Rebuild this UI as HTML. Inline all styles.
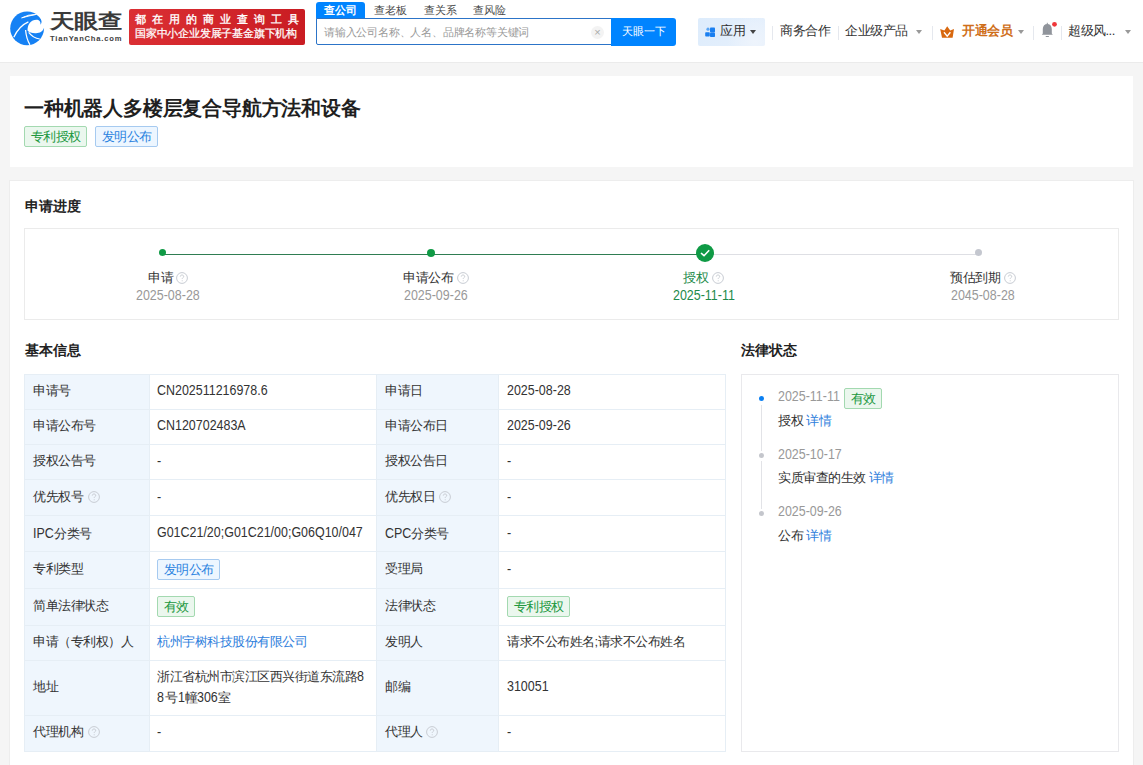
<!DOCTYPE html>
<html><head><meta charset="utf-8">
<style>
*{box-sizing:border-box;margin:0;padding:0}
html,body{width:1143px;height:765px;overflow:hidden}
body{background:#f5f5f5;font-family:"Liberation Sans",sans-serif;color:#333;font-size:12.5px;position:relative}
.a{position:absolute;white-space:nowrap}
#hdr{position:absolute;left:0;top:0;width:1143px;height:63px;background:#fff;border-bottom:1px solid #ebebeb}
.card{position:absolute;background:#fff}
.tag{position:absolute;height:21px;line-height:19px;border:1px solid;border-radius:2px;font-size:13px;letter-spacing:-0.5px;text-align:center;white-space:nowrap}
.tg{color:#22983f;background:#ebf7ee;border-color:#a3d9b0}
.tb{color:#2a82e0;background:#edf6ff;border-color:#a6caf0}
.q{position:absolute;width:12px;height:12px;line-height:0}
.sep{position:absolute;width:1px;height:14px;top:26px;background:#e5e8ee}
.caret{position:absolute;width:0;height:0;border-left:3px solid transparent;border-right:3px solid transparent;border-top:4px solid #999}
.c{position:absolute;white-space:nowrap;font-size:13px;letter-spacing:-0.5px;line-height:16px;color:#333}
.n{position:absolute;white-space:nowrap;font-size:14px;line-height:16px;color:#333;transform:scaleX(.89);transform-origin:0 0}
.h{position:absolute;font-size:14px;font-weight:bold;color:#222;line-height:16px;white-space:nowrap}
.hl{position:absolute;height:1px;background:#e6eef5}
.vl{position:absolute;width:1px;background:#e6eef5}
.lb{position:absolute;background:#eff6fd}
.date{color:#999}
.link{color:#2f80dc}
.ns{display:inline-block;font-size:14px;transform:scaleX(.89);transform-origin:0 0;letter-spacing:0}
</style></head><body>
<div id="hdr">
  <svg class="a" style="left:8px;top:8px" width="40" height="40" viewBox="0 0 40 40">
    <circle cx="19.1" cy="20.4" r="16.9" fill="#1581f4"/>
    <path d="M19.5 22.5 C19.5 16 23 12 28.5 11.8 C31 11.8 33 13.5 32.4 16.8 C34.5 14.5 34.2 10.5 28 6.3 L40 0 L40 19.3 L36.2 19.3 C35 23.5 32 25.2 28 25.2 C24 25.3 21 24.5 19.5 22.5 Z" fill="#fff"/>
    <path d="M13.6 9.9 Q20 6.3 28.4 6.4 Q21 7.8 13.6 9.9 Z" fill="#fff" stroke="#fff" stroke-width="0.9" stroke-linejoin="round"/>
    <path d="M5.8 29.3 Q11 18 20.4 13.9" stroke="#fff" stroke-width="1.25" fill="none"/>
    <path d="M17.6 22 Q18.3 31 22 36.8" stroke="#fff" stroke-width="1.25" fill="none"/>
    <path d="M20.7 24.4 Q25 30.2 31.8 31" stroke="#fff" stroke-width="1.25" fill="none"/>
  </svg>
  <div class="a" style="left:49.6px;top:9.6px;font-size:21px;line-height:24px;font-weight:bold;color:#3a3a3a;transform:scale(1.14,.93);transform-origin:0 0">天眼查</div>
  <div class="a" style="left:50px;top:34px;font-size:7.6px;line-height:10px;font-weight:bold;color:#404040;letter-spacing:0.8px">TianYanCha.com</div>
  <div class="a" style="left:129px;top:9px;width:176px;height:36px;border-radius:2px;background:linear-gradient(90deg,#db2f34,#c91c22)"></div>
  <div class="a" style="left:135px;top:12px;font-size:11px;line-height:14px;color:#fff;letter-spacing:6px;-webkit-text-stroke:0.35px #fff">都在用的商业查询工具</div>
  <div class="a" style="left:135px;top:26px;font-size:11px;line-height:14px;color:#fff;letter-spacing:-0.2px;-webkit-text-stroke:0.25px #fff">国家中小企业发展子基金旗下机构</div>
  <div class="a" style="left:316px;top:2px;width:49px;height:17px;background:#0084ff;border-radius:3px 3px 0 0"></div>
  <div class="a" style="left:316px;top:3px;width:49px;text-align:center;font-size:11px;line-height:14px;color:#fff;font-weight:bold">查公司</div>
  <div class="a" style="left:366px;top:3px;width:49px;text-align:center;font-size:11px;line-height:14px;color:#4a4a4a">查老板</div>
  <div class="a" style="left:415.5px;top:3px;width:49px;text-align:center;font-size:11px;line-height:14px;color:#4a4a4a">查关系</div>
  <div class="a" style="left:465px;top:3px;width:49px;text-align:center;font-size:11px;line-height:14px;color:#4a4a4a">查风险</div>
  <div class="a" style="left:316px;top:18px;width:297px;height:27px;border:1px solid #2c74c8;border-radius:0 0 0 2px;background:#fff"></div>
  <div class="a" style="left:324px;top:24.5px;font-size:11px;line-height:14px;color:#999;letter-spacing:-0.2px">请输入公司名称、人名、品牌名称等关键词</div>
  <div class="a" style="left:591px;top:26px;width:13px;height:13px;border-radius:50%;background:#f3f3f3;color:#aaa;font-size:11px;line-height:13px;text-align:center">×</div>
  <div class="a" style="left:611px;top:18px;width:65px;height:28px;background:#0084ff;border-radius:0 3px 3px 0"></div>
  <div class="a" style="left:612px;top:24px;width:64px;text-align:center;font-size:11px;line-height:14px;color:#fff">天眼一下</div>

  <div class="a" style="left:698px;top:18px;width:67px;height:28px;border-radius:2px;background:radial-gradient(circle at 85% 85%,#eef4fc 0,rgba(238,244,252,0) 45%),linear-gradient(135deg,#ddecfc,#e6f0fc)"></div>
  <svg class="a" style="left:705px;top:27px" width="11" height="11" viewBox="0 0 11 11">
    <circle cx="3" cy="2.2" r="1.6" fill="#5aa6f5"/>
    <rect x="5" y="0.6" width="5" height="4.8" rx="0.8" fill="#1a7ff0"/>
    <rect x="0.2" y="5.2" width="4.6" height="4.4" rx="0.8" fill="#1a7ff0"/>
    <rect x="5" y="5.6" width="5" height="4.4" rx="0.8" fill="#1a7ff0"/>
  </svg>
  <div class="c" style="left:720px;top:23px">应用</div>
  <div class="caret" style="left:750px;top:30px;border-top-color:#444"></div>
  <div class="sep" style="left:772px"></div>
  <div class="c" style="left:780px;top:23px">商务合作</div>
  <div class="sep" style="left:838px"></div>
  <div class="c" style="left:845px;top:23px">企业级产品</div>
  <div class="caret" style="left:916px;top:30px"></div>
  <div class="sep" style="left:932px"></div>
  <svg class="a" style="left:940px;top:26px" width="15" height="13" viewBox="0 0 15 13">
    <path d="M0.2 3 L4.4 4.6 L7.2 0.2 L10.2 4.6 L14 3 L12.6 11.7 L2 11.7 Z" fill="#d8680f"/>
    <path d="M4 6.3 L7.2 10.2 L10.4 6.3" stroke="#fff" stroke-width="1.4" fill="none"/>
  </svg>
  <div class="c" style="left:962px;top:23px;color:#cf6f1a;font-weight:bold">开通会员</div>
  <div class="caret" style="left:1018px;top:30px"></div>
  <div class="sep" style="left:1033px"></div>
  <svg class="a" style="left:1041px;top:21px" width="17" height="17" viewBox="0 0 17 17">
    <path d="M0.8 13.7 L1.8 12.4 L1.8 8 C1.8 4.9 3.8 3 6.3 3 C8.8 3 10.8 4.9 10.8 8 L10.8 12.4 L11.8 13.7 Z" fill="#90949b"/>
    <rect x="5.8" y="1.8" width="1" height="1.6" fill="#90949b"/>
    <rect x="4.6" y="15" width="3.4" height="1" rx="0.5" fill="#90949b"/>
    <circle cx="13.5" cy="3.3" r="2.4" fill="#f0373a"/>
  </svg>
  <div class="sep" style="left:1061px"></div>
  <div class="c" style="left:1068px;top:23px">超级风...</div>
  <div class="caret" style="left:1125px;top:30px"></div>
</div>

<div class="card" style="left:10px;top:76px;width:1123px;height:91px"></div>
<div class="a" style="left:24px;top:96px;font-size:20px;line-height:24px;font-weight:bold;color:#1f1f1f;letter-spacing:-0.2px">一种机器人多楼层复合导航方法和设备</div>
<div class="tag tg" style="left:24px;top:126px;width:63px">专利授权</div>
<div class="tag tb" style="left:95px;top:126px;width:63px">发明公布</div>

<div class="card" style="left:9px;top:180px;width:1125px;height:620px;border:1px solid #ededed"></div>
<div class="h" style="left:25px;top:198px">申请进度</div>
<div class="a" style="left:24px;top:228px;width:1095px;height:92px;border:1px solid #ebebeb"></div>
<div class="a" style="left:162px;top:254px;width:543px;height:1px;background:#2f7d52"></div>
<div class="a" style="left:705px;top:254px;width:273px;height:1px;background:#dedfe4"></div>
<div class="a" style="left:159px;top:249px;width:7px;height:7px;border-radius:50%;background:#0f9a45"></div>
<div class="a" style="left:427px;top:249px;width:8px;height:8px;border-radius:50%;background:#0f9a45"></div>
<div class="a" style="left:696px;top:244px;width:18px;height:18px;border-radius:50%;background:#0f9a45"></div>
<svg class="a" style="left:696px;top:244px" width="18" height="18" viewBox="0 0 18 18"><path d="M5 9 L8 11.7 L13.2 6.3" stroke="#fff" stroke-width="1.6" fill="none"/></svg>
<div class="a" style="left:975px;top:249px;width:7px;height:7px;border-radius:50%;background:#c4c7cf"></div>

<div class="c" style="left:148px;top:270px">申请</div><div class="q" style="left:176px;top:272px"><svg width="12" height="12" viewBox="0 0 12 12"><circle cx="6" cy="6" r="5.4" fill="none" stroke="#c8ccd3" stroke-width="1"/><path d="M4.3 4.6 C4.3 3.6 5 3 6 3 C7 3 7.7 3.6 7.7 4.5 C7.7 5.5 6.2 5.7 6.2 6.9" fill="none" stroke="#c3c7ce" stroke-width="0.9"/><circle cx="6.2" cy="8.7" r="0.55" fill="#c3c7ce"/></svg></div>
<div class="n date" style="left:136px;top:287px">2025-08-28</div>
<div class="c" style="left:403px;top:270px">申请公布</div><div class="q" style="left:457px;top:272px"><svg width="12" height="12" viewBox="0 0 12 12"><circle cx="6" cy="6" r="5.4" fill="none" stroke="#c8ccd3" stroke-width="1"/><path d="M4.3 4.6 C4.3 3.6 5 3 6 3 C7 3 7.7 3.6 7.7 4.5 C7.7 5.5 6.2 5.7 6.2 6.9" fill="none" stroke="#c3c7ce" stroke-width="0.9"/><circle cx="6.2" cy="8.7" r="0.55" fill="#c3c7ce"/></svg></div>
<div class="n date" style="left:404px;top:287px">2025-09-26</div>
<div class="c" style="left:683px;top:270px;color:#1e8a4a">授权</div><div class="q" style="left:712px;top:272px"><svg width="12" height="12" viewBox="0 0 12 12"><circle cx="6" cy="6" r="5.4" fill="none" stroke="#c8ccd3" stroke-width="1"/><path d="M4.3 4.6 C4.3 3.6 5 3 6 3 C7 3 7.7 3.6 7.7 4.5 C7.7 5.5 6.2 5.7 6.2 6.9" fill="none" stroke="#c3c7ce" stroke-width="0.9"/><circle cx="6.2" cy="8.7" r="0.55" fill="#c3c7ce"/></svg></div>
<div class="n" style="left:673px;top:287px;color:#1e8a4a">2025-11-11</div>
<div class="c" style="left:950px;top:270px">预估到期</div><div class="q" style="left:1004px;top:272px"><svg width="12" height="12" viewBox="0 0 12 12"><circle cx="6" cy="6" r="5.4" fill="none" stroke="#c8ccd3" stroke-width="1"/><path d="M4.3 4.6 C4.3 3.6 5 3 6 3 C7 3 7.7 3.6 7.7 4.5 C7.7 5.5 6.2 5.7 6.2 6.9" fill="none" stroke="#c3c7ce" stroke-width="0.9"/><circle cx="6.2" cy="8.7" r="0.55" fill="#c3c7ce"/></svg></div>
<div class="n date" style="left:951px;top:287px">2045-08-28</div>

<div class="h" style="left:25px;top:342px">基本信息</div>
<div class="h" style="left:741px;top:342px">法律状态</div>

<!-- table -->
<div class="lb" style="left:24px;top:374px;width:125px;height:377px"></div>
<div class="lb" style="left:376px;top:374px;width:122px;height:377px"></div>
<div class="hl" style="left:24px;top:374px;width:702px"></div>
<div class="hl" style="left:24px;top:409px;width:702px"></div>
<div class="hl" style="left:24px;top:444px;width:702px"></div>
<div class="hl" style="left:24px;top:479px;width:702px"></div>
<div class="hl" style="left:24px;top:515px;width:702px"></div>
<div class="hl" style="left:24px;top:551px;width:702px"></div>
<div class="hl" style="left:24px;top:588px;width:702px"></div>
<div class="hl" style="left:24px;top:625px;width:702px"></div>
<div class="hl" style="left:24px;top:660px;width:702px"></div>
<div class="hl" style="left:24px;top:715px;width:702px"></div>
<div class="hl" style="left:24px;top:751px;width:702px"></div>
<div class="vl" style="left:24px;top:374px;height:378px"></div>
<div class="vl" style="left:149px;top:374px;height:378px"></div>
<div class="vl" style="left:376px;top:374px;height:378px"></div>
<div class="vl" style="left:498px;top:374px;height:378px"></div>
<div class="vl" style="left:725px;top:374px;height:378px"></div>

<div class="c" style="left:33px;top:383px">申请号</div>
<div class="n" style="left:157px;top:382px">CN202511216978.6</div>
<div class="c" style="left:385px;top:383px">申请日</div>
<div class="n" style="left:507px;top:382px">2025-08-28</div>

<div class="c" style="left:33px;top:418px">申请公布号</div>
<div class="n" style="left:157px;top:417px">CN120702483A</div>
<div class="c" style="left:385px;top:418px">申请公布日</div>
<div class="n" style="left:507px;top:417px">2025-09-26</div>

<div class="c" style="left:33px;top:453px">授权公告号</div>
<div class="n" style="left:157px;top:453px">-</div>
<div class="c" style="left:385px;top:453px">授权公告日</div>
<div class="n" style="left:507px;top:453px">-</div>

<div class="c" style="left:33px;top:489px">优先权号</div><div class="q" style="left:88px;top:491px"><svg width="12" height="12" viewBox="0 0 12 12"><circle cx="6" cy="6" r="5.4" fill="none" stroke="#c8ccd3" stroke-width="1"/><path d="M4.3 4.6 C4.3 3.6 5 3 6 3 C7 3 7.7 3.6 7.7 4.5 C7.7 5.5 6.2 5.7 6.2 6.9" fill="none" stroke="#c3c7ce" stroke-width="0.9"/><circle cx="6.2" cy="8.7" r="0.55" fill="#c3c7ce"/></svg></div>
<div class="n" style="left:157px;top:489px">-</div>
<div class="c" style="left:385px;top:489px">优先权日</div><div class="q" style="left:439px;top:491px"><svg width="12" height="12" viewBox="0 0 12 12"><circle cx="6" cy="6" r="5.4" fill="none" stroke="#c8ccd3" stroke-width="1"/><path d="M4.3 4.6 C4.3 3.6 5 3 6 3 C7 3 7.7 3.6 7.7 4.5 C7.7 5.5 6.2 5.7 6.2 6.9" fill="none" stroke="#c3c7ce" stroke-width="0.9"/><circle cx="6.2" cy="8.7" r="0.55" fill="#c3c7ce"/></svg></div>
<div class="n" style="left:507px;top:489px">-</div>

<div class="c" style="left:33px;top:525px"><span class="ns" style="width:21px">IPC</span>分类号</div>
<div class="n" style="left:157px;top:524px">G01C21/20;G01C21/00;G06Q10/047</div>
<div class="c" style="left:385px;top:525px"><span class="ns" style="width:26px">CPC</span>分类号</div>
<div class="n" style="left:507px;top:525px">-</div>

<div class="c" style="left:33px;top:561px">专利类型</div>
<div class="tag tb" style="left:157px;top:559px;width:63px">发明公布</div>
<div class="c" style="left:385px;top:561px">受理局</div>
<div class="n" style="left:507px;top:561px">-</div>

<div class="c" style="left:33px;top:598px">简单法律状态</div>
<div class="tag tg" style="left:157px;top:596px;width:38px">有效</div>
<div class="c" style="left:385px;top:598px">法律状态</div>
<div class="tag tg" style="left:507px;top:596px;width:63px">专利授权</div>

<div class="c" style="left:33px;top:634px">申请（专利权）人</div>
<div class="c link" style="left:157px;top:634px">杭州宇树科技股份有限公司</div>
<div class="c" style="left:385px;top:634px">发明人</div>
<div class="c" style="left:507px;top:634px">请求不公布姓名;请求不公布姓名</div>

<div class="c" style="left:33px;top:679px">地址</div>
<div class="c" style="left:157px;top:666px;line-height:20px">浙江省杭州市滨江区西兴街道东流路<span class="ns" style="width:8px">8</span><br><span class="ns" style="width:8px">8</span>号<span class="ns" style="width:7px">1</span>幢<span class="ns" style="width:21px">306</span>室</div>
<div class="c" style="left:385px;top:679px">邮编</div>
<div class="n" style="left:507px;top:678px">310051</div>

<div class="c" style="left:33px;top:724px">代理机构</div><div class="q" style="left:88px;top:726px"><svg width="12" height="12" viewBox="0 0 12 12"><circle cx="6" cy="6" r="5.4" fill="none" stroke="#c8ccd3" stroke-width="1"/><path d="M4.3 4.6 C4.3 3.6 5 3 6 3 C7 3 7.7 3.6 7.7 4.5 C7.7 5.5 6.2 5.7 6.2 6.9" fill="none" stroke="#c3c7ce" stroke-width="0.9"/><circle cx="6.2" cy="8.7" r="0.55" fill="#c3c7ce"/></svg></div>
<div class="n" style="left:157px;top:724px">-</div>
<div class="c" style="left:385px;top:724px">代理人</div><div class="q" style="left:426px;top:726px"><svg width="12" height="12" viewBox="0 0 12 12"><circle cx="6" cy="6" r="5.4" fill="none" stroke="#c8ccd3" stroke-width="1"/><path d="M4.3 4.6 C4.3 3.6 5 3 6 3 C7 3 7.7 3.6 7.7 4.5 C7.7 5.5 6.2 5.7 6.2 6.9" fill="none" stroke="#c3c7ce" stroke-width="0.9"/><circle cx="6.2" cy="8.7" r="0.55" fill="#c3c7ce"/></svg></div>
<div class="n" style="left:507px;top:724px">-</div>

<!-- legal status panel -->
<div class="a" style="left:741px;top:374px;width:378px;height:378px;border:1px solid #e9e9ec"></div>
<div class="a" style="left:761px;top:405px;width:1px;height:46px;background:#e2e3e7"></div>
<div class="a" style="left:761px;top:461px;width:1px;height:48px;background:#e2e3e7"></div>
<div class="a" style="left:759px;top:396px;width:5px;height:5px;border-radius:50%;background:#0a7ff2"></div>
<div class="a" style="left:759px;top:453px;width:5px;height:5px;border-radius:50%;background:#c4c6cc"></div>
<div class="a" style="left:759px;top:511px;width:5px;height:5px;border-radius:50%;background:#c4c6cc"></div>
<div class="n date" style="left:778px;top:388px">2025-11-11</div>
<div class="tag tg" style="left:844px;top:388px;width:38px">有效</div>
<div class="c" style="left:778px;top:413px">授权 <span class="link">详情</span></div>
<div class="n date" style="left:778px;top:446px">2025-10-17</div>
<div class="c" style="left:778px;top:470px">实质审查的生效 <span class="link">详情</span></div>
<div class="n date" style="left:778px;top:503px">2025-09-26</div>
<div class="c" style="left:778px;top:528px">公布 <span class="link">详情</span></div>
</body></html>
